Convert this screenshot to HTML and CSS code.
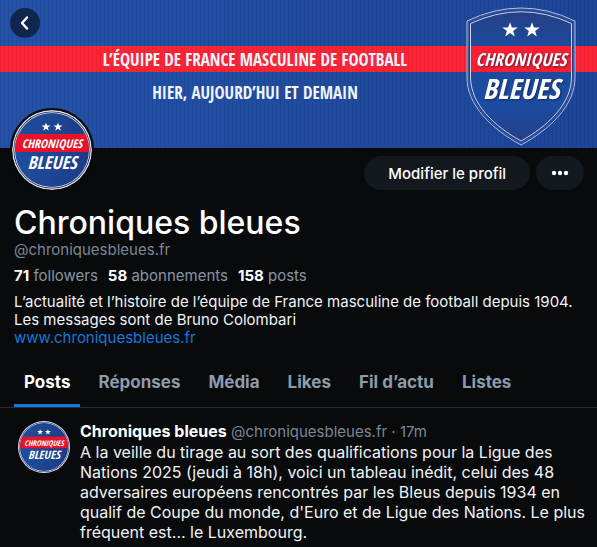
FILE: index.html
```html
<!DOCTYPE html>
<html lang="fr">
<head>
    <meta charset="UTF-8">
    <meta name="viewport" content="width=device-width, initial-scale=1.0">
    <title>Chroniques bleues (@chroniquesbleues.fr)</title>
    <link rel="stylesheet" href="styles.css">
</head>
<body>
    <header class="banner">
        <button class="back" type="button" aria-label="Retour">
            <svg width="30" height="30" viewBox="0 0 30 30"><path d="M17 9.500L12 15l5 5.500" fill="none" stroke="#fff" stroke-width="2.400" stroke-linejoin="round" stroke-linecap="round"/></svg>
        </button>
        <div class="slogan">
            <p>L’ÉQUIPE DE FRANCE MASCULINE DE FOOTBALL</p>
            <p>HIER, AUJOURD’HUI ET DEMAIN</p>
        </div>
        <svg class="shield" width="110" height="140" viewBox="0 0 110 140" role="img" aria-label="Chroniques bleues">
            <defs>
                <linearGradient id="shield-blue" x1="0" y1="0" x2="0" y2="1">
                    <stop offset="0" stop-color="#263f86"/>
                    <stop offset="0.3" stop-color="#1c4ba0"/>
                    <stop offset="0.75" stop-color="#1c4ba0"/>
                    <stop offset="1" stop-color="#263f86"/>
                </linearGradient>
                <path id="star" d="M0-6L1.5-2H6L2.4 .7 3.7 5 0 2.4-3.7 5-2.4 .7-6-2H-1.5Z"/>
            </defs>
            <path d="M1 14Q55-12 109 14V70C109 99 84 122 55 138C26 122 1 99 1 70Z" fill="#1c3f91" stroke="#b4c2e2"/>
            <path d="M2.500 15Q55-10 107.500 15V70C107.500 98 83 120.500 55 136.500C27 120.500 2.500 98 2.500 70Z" fill="none" stroke="#3b5ba5"/>
            <path d="M4.500 16.500Q55-7 105.500 16.500V70C105.500 97 82 119 55 134C28 119 4.500 97 4.500 70Z" fill="url(#shield-blue)" stroke="#ccd5ea"/>
            <rect x="5" y="39" width="100" height="26" fill="#f91f30"/>
            <use href="#star" transform="translate(44 23) scale(1.300)" fill="#fff"/>
            <use href="#star" transform="translate(66 23) scale(1.300)" fill="#fff"/>
            <text class="logo-text shadow" x="55" y="59" font-size="18">CHRONIQUES</text>
            <text class="logo-text shadow" x="55" y="92" font-size="28">BLEUES</text>
        </svg>
    </header>

    <main>
        <section class="profile">
            <div class="profile-top">
                <svg class="avatar" viewBox="0 0 80 80" role="img" aria-label="Chroniques bleues">
                    <defs>
                        <linearGradient id="blue" x1="0" y1="0" x2="1" y2="0">
                            <stop offset="0" stop-color="#1c50a0"/>
                            <stop offset="1" stop-color="#1e3a85"/>
                        </linearGradient>
                        <clipPath id="disc"><circle cx="40" cy="40" r="37"/></clipPath>
                    </defs>
                    <g id="logo">
                        <circle cx="40" cy="40" r="40" fill="#dfe4ee"/>
                        <circle cx="40" cy="40" r="38.6" fill="#1b2c5c"/>
                        <circle cx="40" cy="40" r="37.8" fill="#dfe4ee"/>
                        <g clip-path="url(#disc)">
                            <rect width="80" height="80" fill="url(#blue)"/>
                            <rect y="24" width="80" height="18" fill="#e8122b"/>
                        </g>
                        <use href="#star" transform="translate(34 17) scale(.75)" fill="#fff"/>
                        <use href="#star" transform="translate(46 17) scale(.75)" fill="#fff"/>
                        <text class="logo-text" x="40" y="38" font-size="12">CHRONIQUES</text>
                        <text class="logo-text" x="40" y="59" font-size="18">BLEUES</text>
                    </g>
                </svg>
                <div class="actions">
                    <button class="btn" type="button">Modifier le profil</button>
                    <button class="btn btn-more" type="button" aria-label="Plus d’options">
                        <svg width="20" height="20" viewBox="0 0 20 20" fill="#fff"><circle cx="4" cy="10" r="2.200"/><circle cx="10" cy="10" r="2.200"/><circle cx="16" cy="10" r="2.200"/></svg>
                    </button>
                </div>
            </div>
            <h1>Chroniques bleues</h1>
            <p class="handle">@chroniquesbleues.fr</p>
            <div class="stats">
                <span><b>71</b> followers</span>
                <span><b>58</b> abonnements</span>
                <span><b>158</b> posts</span>
            </div>
            <p class="bio">L’actualité et l’histoire de l’équipe de France masculine de football depuis 1904.<br>
            Les messages sont de Bruno Colombari<br>
            <a href="#">www.chroniquesbleues.fr</a></p>
        </section>

        <nav class="tabs">
            <a class="active" href="#">Posts</a>
            <a href="#">Réponses</a>
            <a href="#">Média</a>
            <a href="#">Likes</a>
            <a href="#">Fil d’actu</a>
            <a href="#">Listes</a>
        </nav>

        <article class="post">
            <svg class="post-avatar" viewBox="0 0 80 80" aria-hidden="true"><use href="#logo"/></svg>
            <div class="post-body">
                <div class="post-meta"><b>Chroniques bleues</b> @chroniquesbleues.fr · 17m</div>
                <p>A la veille du tirage au sort des qualifications pour la Ligue des Nations 2025 (jeudi à 18h), voici un tableau inédit, celui des 48 adversaires européens rencontrés par les Bleus depuis 1934 en qualif de Coupe du monde, d'Euro et de Ligue des Nations. Le plus fréquent est... le Luxembourg.</p>
            </div>
        </article>
    </main>
</body>
</html>
```

FILE: styles.css
```css
* {
    box-sizing: border-box;
}
body {
    font-family: Inter, "Liberation Sans", sans-serif;
    font-size: 15px;
    margin: 0;
    background-color: #080a0c;
    color: #f1f3f5;
}
p, h1 {
    margin: 0;
}
a {
    text-decoration: none;
}
button {
    border: none;
    font: inherit;
    color: #fff;
    cursor: pointer;
}

/* Banner */
.banner {
    position: relative;
    display: flex;
    height: 148px;
    padding: 7px 21px 0 44px;
    background:
        repeating-linear-gradient(90deg, rgba(0, 0, 40, 0.07) 0 1px, transparent 1px 4px),
        linear-gradient(transparent 46px, #ff2433 46px 72px, transparent 72px),
        linear-gradient(90deg, #2352a8, #1c4698);
}
.back {
    position: absolute;
    top: 8px;
    left: 10px;
    width: 30px;
    height: 30px;
    padding: 0;
    border-radius: 50%;
    background-color: #11264f;
}
.back svg {
    display: block;
}
.slogan {
    flex: 1;
    padding-top: 36px;
    text-align: center;
    white-space: nowrap;
    font-family: "Open Sans Condensed", "Liberation Sans Narrow", "Liberation Sans", sans-serif;
    font-size: 17px;
    font-weight: bold;
    line-height: 33px;
    color: #f1f4fb;
}
.shield {
    flex: none;
}
.logo-text {
    font-family: "Open Sans Condensed", "Liberation Sans Narrow", "Liberation Sans", sans-serif;
    font-weight: bold;
    font-style: italic;
    text-anchor: middle;
    fill: #fff;
}
.shadow {
    filter: drop-shadow(1px 1px 1px rgba(10, 20, 60, 0.6));
}

/* Profile */
.profile {
    padding: 0 13px 0 14px;
}
.profile-top {
    display: flex;
    justify-content: space-between;
    height: 56px;
}
.avatar {
    position: relative;
    width: 84px;
    height: 84px;
    margin: -40px 0 0 -4px;
    border: 2px solid #080a0c;
    border-radius: 50%;
    background-color: #080a0c;
}
.actions {
    display: flex;
    gap: 6px;
    padding-top: 8px;
}
.btn {
    height: 34px;
    padding: 0 24px;
    border-radius: 17px;
    background-color: #14191f;
    font-size: 15px;
    font-weight: 500;
}
.btn-more {
    padding: 0 14px;
}
.btn-more svg {
    display: block;
}
h1 {
    font-size: 32px;
    font-weight: 500;
    line-height: 38px;
    color: #fff;
}
.handle {
    line-height: 16px;
    color: #7b8894;
}
.stats {
    display: flex;
    gap: 10px;
    margin-top: 8px;
    line-height: 20px;
    color: #8896a5;
}
.stats b {
    color: #fff;
}
.bio {
    margin-top: 7px;
    line-height: 18px;
}
.bio a {
    color: #1478dc;
}

/* Tabs */
.tabs {
    display: flex;
    gap: 8px;
    margin-top: 9px;
    padding: 0 14px;
    border-bottom: 1px solid #2a2e33;
}
.tabs a {
    padding: 15px 10px 11px;
    border-bottom: 3px solid transparent;
    font-size: 17px;
    font-weight: 700;
    line-height: 22px;
    color: #8d9caa;
}
.tabs .active {
    border-color: #1478dc;
    color: #fff;
}

/* Post */
.post {
    display: flex;
    gap: 10px;
    padding: 13px 8px 4px 18px;
}
.post-avatar {
    flex: none;
    width: 52px;
    height: 52px;
}
.post-meta {
    line-height: 20px;
    color: #7b8894;
}
.post-meta b {
    font-size: 16px;
    color: #fff;
}
.post p {
    font-size: 16px;
    line-height: 20px;
}
```
